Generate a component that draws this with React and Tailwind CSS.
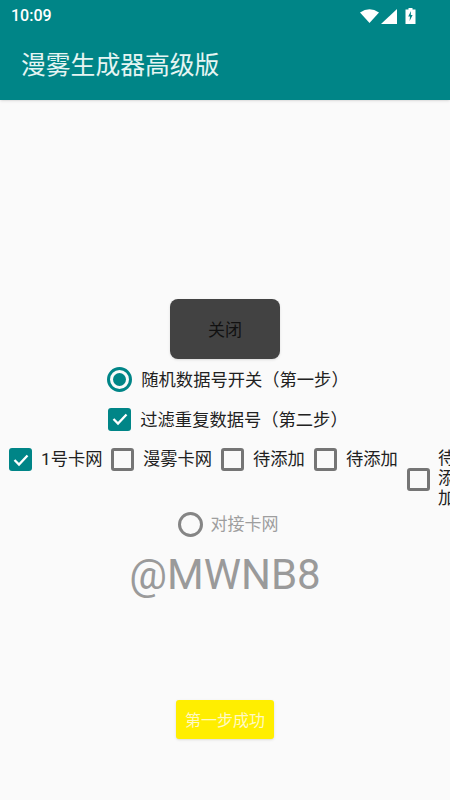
const cjk = "font-['Roboto','Noto_Sans_CJK_SC',sans-serif]"

const Checkbox = ({ checked }) => (
  <div
    className={
      checked
        ? 'w-[23px] h-[23px] shrink-0 rounded-[3px] bg-[#008587] flex items-center justify-center'
        : 'w-[23px] h-[23px] shrink-0 rounded-[3px] border-[3px] border-[#757575]'
    }>
    {checked && (
      <svg width="18" height="18" viewBox="0 0 18 18" fill="none">
        <path d="M2.5 9 L7 13.5 L15.5 4.5" stroke="#fff" strokeWidth="2.3" />
      </svg>
    )}
  </div>
)

const Radio = ({ checked }) => (
  <div
    className={
      checked
        ? 'w-[25px] h-[25px] shrink-0 rounded-full border-[3px] border-[#008587] flex items-center justify-center'
        : 'w-[25px] h-[25px] shrink-0 rounded-full border-[3px] border-[#858585]'
    }>
    {checked && <div className="w-[13px] h-[13px] rounded-full bg-[#008587]" />}
  </div>
)

const StatusIcons = () => (
  <div className="flex items-center">
    <svg width="19" height="14" viewBox="0 0 19 14" className="mr-[2px]">
      <path d="M0 3.5 Q9.5 -3 19 3.5 L9.5 14 Z" fill="#fff" />
    </svg>
    <svg width="16" height="15" viewBox="0 0 16 15">
      <path d="M16 0 V15 H0 Z" fill="#fff" />
    </svg>
    <svg width="11" height="16" viewBox="0 0 11 16" className="ml-[8px]">
      <path d="M3.5 0 H7.5 V1.5 H10.5 V16 H0.5 V1.5 H3.5 Z" fill="#fff" />
      <path d="M6 3 L3.2 8.5 H5 L4.6 13 L7.6 7 H5.8 Z" fill="#008587" />
    </svg>
  </div>
)

export default function App() {
  return (
    <div className={`${cjk} w-[450px] h-[800px] overflow-hidden bg-[#fafafa] flex flex-col`}>
      <header className="h-[100px] bg-[#008587] shrink-0 shadow-sm">
        <div className="h-[32px] pl-[11px] pr-[34px] flex items-center justify-between">
          <span className="text-[16px] font-medium text-white font-['Roboto',sans-serif]">10:09</span>
          <StatusIcons />
        </div>
        <h1 className="pl-[21px] mt-[2px] text-[24.8px] leading-[64px] text-[#e6f5f3]">漫雾生成器高级版</h1>
      </header>

      <main className="flex flex-col items-center pt-[199px]">
        <button className="w-[110px] h-[60px] pt-[3px] rounded-[8px] bg-[#424242] text-[17px] text-[#111] shadow-sm">
          关闭
        </button>

        <div className="mt-[8px] h-[24px] pl-[6px] flex items-center gap-[9px] text-[17.3px] text-[#212121]">
          <Radio checked />
          <span className="pt-[3px]">随机数据号开关（第一步）</span>
        </div>

        <div className="mt-[17px] h-[22px] pl-[6px] flex items-center gap-[9px] text-[17.3px] text-[#212121]">
          <Checkbox checked />
          <span className="pt-[3px]">过滤重复数据号（第二步）</span>
        </div>

        <div className="mt-[18px] w-[450px] h-[62px] pl-[9px] flex items-start text-[17.3px] text-[#212121] overflow-hidden">
          <Checkbox checked />
          <span className="ml-[9px] w-[61px] shrink-0 whitespace-nowrap leading-[22px]">1号卡网</span>
          <div className="ml-[9px]"><Checkbox /></div>
          <span className="ml-[9px] w-[70px] shrink-0 whitespace-nowrap leading-[22px]">漫雾卡网</span>
          <div className="ml-[8px]"><Checkbox /></div>
          <span className="ml-[9px] w-[52px] shrink-0 whitespace-nowrap leading-[22px]">待添加</span>
          <div className="ml-[9px]"><Checkbox /></div>
          <span className="ml-[9px] w-[52px] shrink-0 whitespace-nowrap leading-[22px]">待添加</span>
          <div className="ml-[9px] mt-[20px]"><Checkbox /></div>
          <span className="ml-[8px] w-[12px] shrink-0 leading-[20px] break-all">待添加</span>
        </div>

        <div className="mt-[2px] h-[24px] pl-[6px] flex items-center gap-[8px] text-[17px] text-[#9e9e9e]">
          <Radio />
          <span className="pt-[1px]">对接卡网</span>
        </div>

        <div className="mt-[12px] text-[42px] leading-[54px] text-[#9a9a9a]">@MWNB8</div>

        <button className="mt-[98px] w-[98px] h-[39px] pt-[2px] rounded-[3px] bg-[#ffee00] text-[16px] text-[#fff9c4] shadow-sm">
          第一步成功
        </button>
      </main>
    </div>
  )
}
